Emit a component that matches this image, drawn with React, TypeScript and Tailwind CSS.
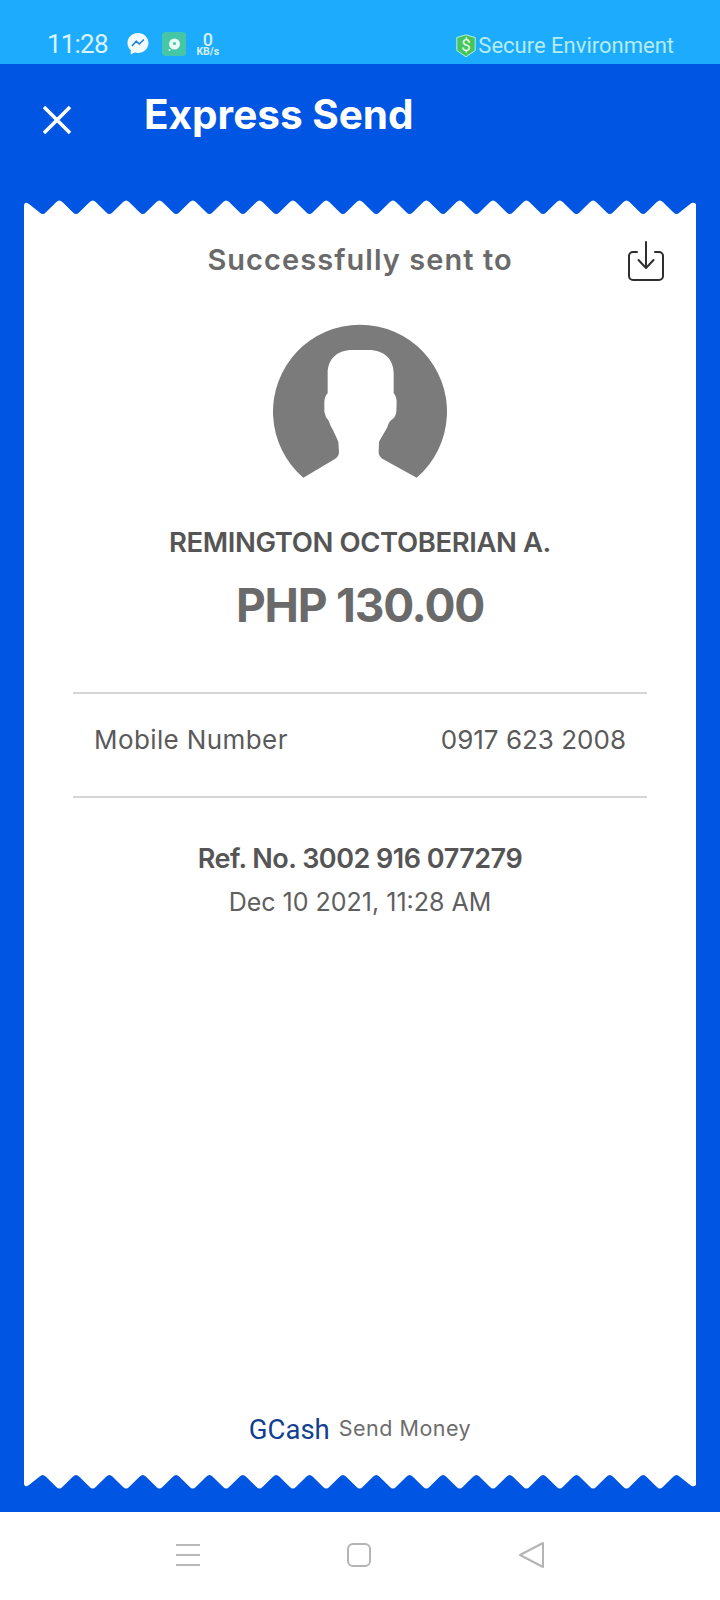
import React from 'react';

// Receipt edge, drawn once and flipped for the bottom. Tips are eased with Q so they stay soft
const zigzagPath = (): string => {
    const step = 33.36;
    let d = 'M0 16 L0 5 Q0.5 2.800 2 2.800 Q3 2.800 5 4';
    for (let k = 0; k < 20; k++) {
        const peak = 2 + step * k;
        const valley = peak + step / 2;
        d += ` L${valley - 3} 12.600 Q${valley} 15.600 ${valley + 3} 12.600`;
        if (k < 19) {
            d += ` L${peak + step - 3} 2 Q${peak + step} -1 ${peak + step + 3} 2`;
        } else {
            d += ` L${peak + step - 3} 4 Q${peak + step} 1.600 672 4`;
        }
    }
    d += ' L672 16 Z';
    return d;
};

const ReceiptEdge: React.FC<{ flip?: boolean }> = ({ flip }) => (
    <svg
        width="672"
        height="16"
        viewBox="0 0 672 16"
        className={flip ? 'block -scale-y-100' : 'block'}
    >
        <path d={zigzagPath()} fill="#ffffff" />
    </svg>
);

const Avatar: React.FC = () => (
    <svg width="220" height="180" viewBox="0 0 660 540" className="block">
        <path
            fill="#7b7b7b"
            d="M160 503 A261 261 0 1 1 500 503 L397 446 Q386 438 386 425 L387 395 L412 352 Q416 336 424 330 Q437 322 439 305 L440 275 Q439 258 431 250 L431 190 C431 150 405 120 355 120 L308 120 C258 120 233 150 233 190 L233 250 Q224 258 223 275 L223 305 Q225 320 236 332 Q242 350 250 362 L265 395 L267 425 Q267 438 256 446 Z"
        />
    </svg>
);

const MessengerIcon: React.FC = () => (
    <svg width="22" height="24" viewBox="0 0 22 24" className="block">
        <path fill="#f2fbff" d="M11 1C5 1 0.5 5.400 0.5 11c0 3 1.200 5.500 3.300 7.300V22.500l3.800-2.100c1.100.3 2.200.5 3.400.5 6 0 10.500-4.400 10.500-9.900S17 1 11 1z" />
        <path fill="none" stroke="#1d7fe0" strokeWidth="1.600" strokeLinejoin="round" d="M5 14l4.200-4.800 3 2.800 4.800-4.500" />
    </svg>
);

const AppIcon: React.FC = () => (
    <div className="flex h-6 w-6 items-center justify-center rounded-[4px] bg-[#45c7a6]">
        <svg width="18" height="18" viewBox="0 0 18 18">
            <circle cx="9.500" cy="9" r="5.500" fill="#e8fbf4" />
            <circle cx="9.500" cy="8.500" r="1.500" fill="#45c7a6" />
            <circle cx="4.500" cy="15" r="1" fill="#e8fbf4" />
        </svg>
    </div>
);

const ShieldIcon: React.FC = () => (
    <svg width="20" height="24" viewBox="0 0 20 24" className="block">
        <path fill="#46c45e" stroke="#b5f0d8" strokeWidth="1" d="M0.800 3.500L10 0.800l9.200 2.700v13L10 22.800l-9.200-6.300z" />
        <text x="10" y="17" textAnchor="middle" fontSize="17" fill="#e6fbe8" fontFamily="Roboto, sans-serif">$</text>
    </svg>
);

const SaveIcon: React.FC = () => (
    <svg width="38" height="42" viewBox="0 0 38 42" fill="none" stroke="#2e2e2e" strokeWidth="2" strokeLinecap="round" strokeLinejoin="round" className="block">
        <path d="M10 11H6a4 4 0 0 0-4 4v20a4 4 0 0 0 4 4h26a4 4 0 0 0 4-4V15a4 4 0 0 0-4-4h-4" />
        <path d="M19 1v25" />
        <path d="M11.500 19l7.500 8 7.500-8" />
    </svg>
);

export default function App() {
    return (
        <div className="flex h-[1600px] w-[720px] flex-col overflow-hidden bg-white font-['Inter',sans-serif]">
            {/* Status bar */}
            <div className="flex h-16 shrink-0 items-end justify-between bg-[#1dabfe] pb-[5px] pl-[47px] pr-[46px] font-['Roboto',sans-serif]">
                <div className="flex items-center">
                    <span className="text-[26px] leading-[30px] tracking-[-0.8px] text-[#d9f3ff]">11:28</span>
                    <div className="ml-[19px]"><MessengerIcon /></div>
                    <div className="ml-[13px]"><AppIcon /></div>
                    <div className="ml-[7px] flex w-[30px] flex-col items-center text-[#d6f1f4]">
                        <span className="text-[18px] font-medium leading-[15px]">0</span>
                        <span className="text-[10.500px] font-bold leading-[10px]">KB/s</span>
                    </div>
                </div>
                <div className="flex items-center">
                    <ShieldIcon />
                    <span className="ml-[2px] text-[22px] leading-[26px] text-[#b4ecef]">Secure Environment</span>
                </div>
            </div>

            {/* Blue section with receipt */}
            <div className="flex h-[1448px] shrink-0 flex-col bg-[#0056e2]">
                <div className="flex h-[136px] shrink-0 items-start pl-[43px] pt-[28px]">
                    <svg width="28" height="28" viewBox="0 0 28 28" className="mt-[14px] block" stroke="#ffffff" strokeWidth="3.500">
                        <path d="M1 1l26 26M27 1L1 27" />
                    </svg>
                    <h1 className="ml-[73px] text-[40.500px] font-bold leading-[46px] text-white">Express Send</h1>
                </div>

                <div className="mx-6 flex w-[672px] flex-col">
                    <ReceiptEdge />
                    <div className="flex h-[1257px] flex-col items-center bg-white">
                        <div className="relative flex h-[60px] w-full items-center justify-center pt-[28px]">
                            <span className="text-[29px] font-semibold leading-[36px] tracking-[1.050px] text-[#6a6a6a]">Successfully sent to</span>
                            <div className="absolute right-[31px] top-[25px]"><SaveIcon /></div>
                        </div>
                        <div className="mt-[34px]"><Avatar /></div>
                        <div className="mt-[35px] text-[27.5px] font-semibold leading-[34px] tracking-[-0.4px] text-[#555555]">REMINGTON OCTOBERIAN A.</div>
                        <div className="mt-[16px] text-[46px] font-bold leading-[60px] tracking-[-1.2px] text-[#6a6a6a]">PHP 130.00</div>

                        <div className="mt-[57px] flex h-[106px] w-[574px] items-center justify-between border-y-2 border-[#d4d4d4] px-[21px] pb-[10px] text-[26px] leading-[32px] text-[#5a5a5a]">
                            <span className="tracking-[0.4px]">Mobile Number</span>
                            <span className="tracking-[0px]">0917 623 2008</span>
                        </div>

                        <div className="mt-[42px] text-[27px] font-semibold leading-[38px] tracking-[-0.5px] text-[#555555]">Ref. No. 3002 916 077279</div>
                        <div className="mt-[8px] text-[25px] leading-[32px] tracking-[0px] text-[#5f5f5f]">Dec 10 2021, 11:28 AM</div>

                        <div className="mt-auto flex items-center pb-[23px]">
                            <span className="font-['Roboto',sans-serif] text-[27.5px] leading-[36px] text-[#123f8f]">GCash</span>
                            <span className="mb-[4px] ml-[9px] text-[21.5px] leading-[36px] tracking-[0.5px] text-[#6d6d6d]">Send Money</span>
                        </div>
                    </div>
                    <ReceiptEdge flip />
                </div>
            </div>

            {/* Android nav bar */}
            <div className="flex grow items-center justify-between bg-white pb-[2px] pl-[176px] pr-[176px]">
                <svg width="24" height="24" viewBox="0 0 24 24" stroke="#b9b9b9" strokeWidth="2" className="block">
                    <path d="M0 2h24M0 12h24M0 22h24" />
                </svg>
                <svg width="24" height="24" viewBox="0 0 24 24" fill="none" stroke="#b4b4b4" strokeWidth="2" className="block">
                    <rect x="1" y="1" width="22" height="22" rx="5" />
                </svg>
                <svg width="26" height="28" viewBox="0 0 26 28" fill="none" stroke="#b4b4b4" strokeWidth="2" strokeLinejoin="round" className="block">
                    <path d="M25 2v24L2 14z" />
                </svg>
            </div>
        </div>
    );
}
